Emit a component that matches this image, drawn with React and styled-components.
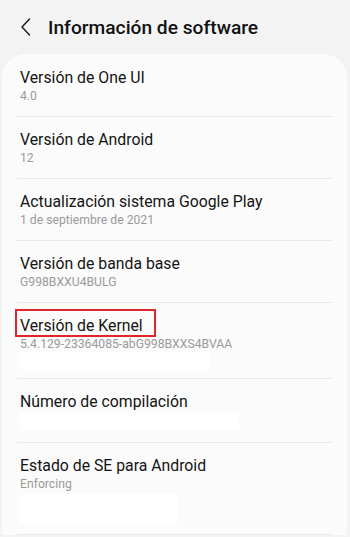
import styled, { createGlobalStyle } from "styled-components";

const GlobalStyle = createGlobalStyle`
  html, body {
    margin: 0;
    padding: 0;
    background: #f3f3f3;
  }
  body {
    font-family: Roboto, "Noto Sans", sans-serif;
    -webkit-font-smoothing: antialiased;
  }
`;

const items = [
  { title: "Versión de One UI", value: "4.0" },
  { title: "Versión de Android", value: "12" },
  { title: "Actualización sistema Google Play", value: "1 de septiembre de 2021" },
  { title: "Versión de banda base", value: "G998BXXU4BULG" },
  {
    title: "Versión de Kernel",
    value: "5.4.129-23364085-abG998BXXS4BVAA",
    marked: true,
    hidden: { w: 189, h: 17, mt: 0, mb: -3 },
  },
  { title: "Número de compilación", hidden: { w: 219, h: 17, mt: 1, mb: 0 } },
  {
    title: "Estado de SE para Android",
    value: "Enforcing",
    hidden: { w: 157, h: 30, mt: 2, mb: -2 },
  },
];

function BackIcon() {
  return (
    <svg width="12" height="20" viewBox="0 0 12 20" fill="none">
      <path d="M9.5 2 L2 10 L9.5 18" stroke="#1a1a1a" strokeWidth="1.4" strokeLinecap="round" strokeLinejoin="round" />
    </svg>
  );
}

function App() {
  return (
    <Screen>
      <GlobalStyle />
      <Header>
        <BackButton>
          <BackIcon />
        </BackButton>
        <Title>Información de software</Title>
      </Header>
      <Card>
        {items.map((item) => (
          <Row key={item.title}>
            {item.marked ? (
              <Highlight>
                <ItemTitle>{item.title}</ItemTitle>
              </Highlight>
            ) : (
              <ItemTitle>{item.title}</ItemTitle>
            )}
            {item.value && <ItemValue>{item.value}</ItemValue>}
            {item.hidden && (
              <Redacted
                $w={item.hidden.w}
                $h={item.hidden.h}
                $mt={item.hidden.mt}
                $mb={item.hidden.mb}
              />
            )}
          </Row>
        ))}
      </Card>
    </Screen>
  );
}

export default App;

const Screen = styled.div`
  width: 350px;
  height: 537px;
  overflow: hidden;
  background: #f3f3f3;
`;

const Header = styled.div`
  display: flex;
  align-items: center;
  height: 54px;
  padding-left: 20px;
  box-sizing: border-box;
`;

const BackButton = styled.div`
  display: flex;
  align-items: center;
  width: 28px;
  height: 20px;
  margin-top: -1px;
`;

const Title = styled.h1`
  margin: 0;
  font-size: 19.2px;
  font-weight: 500;
  color: #111;
`;

const Card = styled.div`
  margin: 0 3px 0 2px;
  background: #fbfbfb;
  border-radius: 24px 24px 0 0;
  padding: 1px 15px 0 15px;
`;

const Row = styled.div`
  display: flex;
  flex-direction: column;
  align-items: flex-start;
  padding: 13px 3px 12px 3px;
  border-bottom: 1px solid #e9e9e9;
`;

const Highlight = styled.div`
  width: 141px;
  height: 28px;
  box-sizing: border-box;
  border: 2px solid #e0262c;
  padding: 5px 0 0 3px;
  margin: -7px 0 -1px -5px;
`;

const ItemTitle = styled.div`
  font-size: 15.8px;
  line-height: 20px;
  color: #141414;
  white-space: nowrap;
`;

const ItemValue = styled.div`
  font-size: 12.2px;
  line-height: 16px;
  color: #9a9a9a;
`;

const Redacted = styled.div`
  width: ${(p) => p.$w}px;
  height: ${(p) => p.$h}px;
  margin-top: ${(p) => p.$mt}px;
  margin-bottom: ${(p) => p.$mb}px;
  background: #ffffff;
`;
